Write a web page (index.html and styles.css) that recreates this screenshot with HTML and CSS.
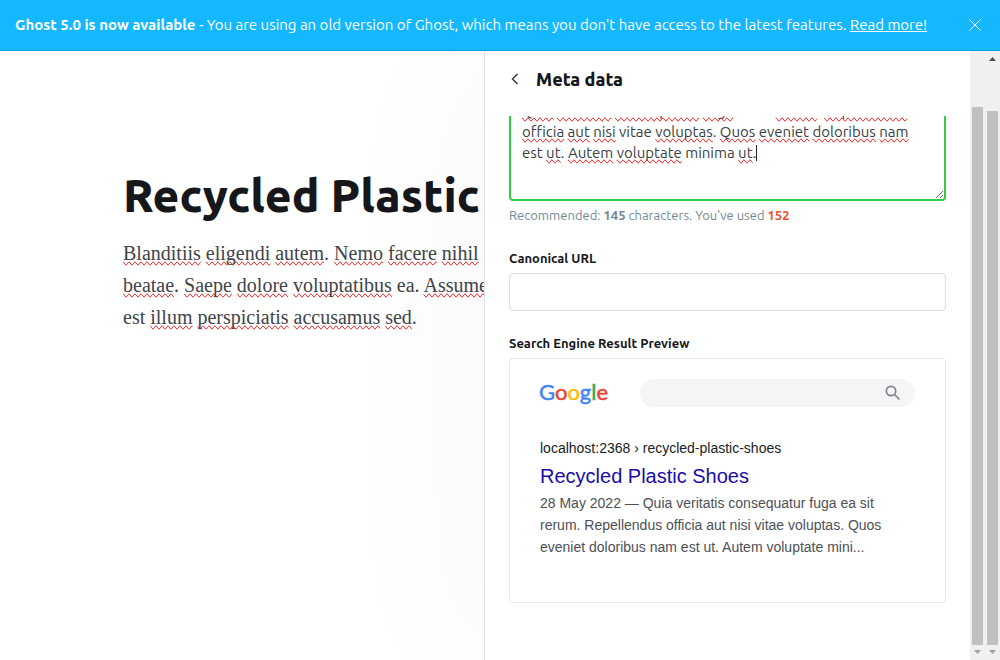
FILE: index.html
```html
<!DOCTYPE html>
<html lang="en">
<head>
<meta charset="utf-8">
<title>Meta data</title>
<link rel="stylesheet" href="styles.css">
</head>
<body>
<div class="app">
  <aside class="banner">
    <p class="banner-text"><strong>Ghost 5.0 is now available</strong> - You are using an old version of Ghost, which means you don't have access to the latest features. <a href="#">Read more!</a></p>
    <button class="banner-close" type="button" aria-label="Dismiss"><svg width="12" height="12" viewBox="0 0 12 12"><path d="M.5.5l11 11M11.5.5l-11 11"/></svg></button>
  </aside>
  <div class="workspace">
    <main class="editor">
      <h1 class="title">Recycled Plastic Shoes</h1>
      <p class="copy"><u>Blanditiis</u> <u>eligendi</u> <u>autem</u>. <u>Nemo</u> <u>facere</u> <u>nihil</u><br><u>beatae</u>. <u>Saepe</u> <u>dolore</u> <u>voluptatibus</u> ea. <u>Assumenda</u><br>est <u>illum</u> <u>perspiciatis</u> <u>accusamus</u> <u>sed</u>.</p>
    </main>
    <section class="panel">
      <header class="panel-head">
        <button class="back" type="button" aria-label="Back"><svg width="8" height="12" viewBox="0 0 8 12"><path d="M6.5 1L1.5 6l5 5"/></svg></button>
        <h2 class="panel-title">Meta data</h2>
      </header>
      <div class="panel-body">
        <div class="field description">
          <div class="area">
            <textarea class="area-text" aria-label="Meta description" wrap="off" spellcheck="false">Quia veritatis consequatur fuga ea sit rerum. Repellendus
officia aut nisi vitae voluptas. Quos eveniet doloribus nam
est ut. Autem voluptate minima ut.</textarea>
            <div class="area-text area-marks" aria-hidden="true"><u>Quia</u> <u>veritatis</u> <u>consequatur</u> <u>fuga</u> ea sit <u>rerum</u>. <u>Repellendus</u>
<u>officia</u> <u>aut</u> <u>nisi</u> vitae <u>voluptas</u>. <u>Quos</u> <u>eveniet</u> <u>doloribus</u> <u>nam</u>
est <u>ut</u>. <u>Autem</u> <u>voluptate</u> minima <u>ut</u>.<span class="caret"></span></div>
          </div>
          <p class="hint">Recommended: <b>145</b> characters. You’ve used <b class="over">152</b></p>
        </div>
        <div class="field">
          <label class="label" for="canonical">Canonical URL</label>
          <input class="input" id="canonical" type="text">
        </div>
        <div class="field">
          <h3 class="label">Search Engine Result Preview</h3>
          <div class="preview">
            <div class="search-row">
              <svg class="logo" width="70" height="30" viewBox="0 0 70 30" role="img" aria-label="Google"><text x="-1" y="22"><tspan class="blue">G</tspan><tspan class="red">o</tspan><tspan class="yellow">o</tspan><tspan class="blue">g</tspan><tspan class="green">l</tspan><tspan class="red">e</tspan></text></svg>
              <div class="search-bar"><svg width="16" height="16" viewBox="0 0 16 16"><circle cx="6" cy="6" r="4.7"/><path d="M9.5 9.5l5 5"/></svg></div>
            </div>
            <div class="result-url">localhost:2368 › recycled-plastic-shoes</div>
            <a class="result-title" href="#">Recycled Plastic Shoes</a>
            <p class="result-text">28 May 2022 — Quia veritatis consequatur fuga ea sit rerum. Repellendus officia aut nisi vitae voluptas. Quos eveniet doloribus nam est ut. Autem voluptate mini...</p>
          </div>
        </div>
      </div>
    </section>
    <div class="track inner"><div class="thumb"></div><svg width="7" height="4" viewBox="0 0 7 4"><path d="M0 0h7L3.500 4z"/></svg></div>
    <div class="track outer"><svg class="up" width="7" height="4" viewBox="0 0 7 4"><path d="M0 4h7L3.500 0z"/></svg><div class="thumb"></div><svg width="7" height="4" viewBox="0 0 7 4"><path d="M0 0h7L3.500 4z"/></svg></div>
  </div>
</div>
</body>
</html>
```
FILE: styles.css
```css
* { box-sizing: border-box; margin: 0; }
body { font-family: Ubuntu, "Noto Sans", sans-serif; color: #15171a; background: #fff; }
button { border: 0; padding: 0; background: none; display: flex; cursor: pointer; }
svg { display: block; fill: none; }
.app { min-height: 100vh; display: flex; flex-direction: column; }

.banner { display: flex; align-items: center; justify-content: space-between; padding: 0 19px 0 15px; min-height: 51px; background: #14b8ff; border-bottom: 1px solid #0a9ee6; color: #fff; }
.banner-text { font-size: 15px; line-height: 20px; }
.banner a { color: inherit; }
.banner-close { stroke: #fff; }

.workspace { flex: 1; display: grid; grid-template-columns: minmax(0, 1fr) 486px 15px 15px; overflow: hidden; }
.editor { overflow: hidden; white-space: nowrap; padding: 112px 0 0 123px; }
.title { font-size: 46px; line-height: 64px; font-weight: 800; margin-bottom: 10px; }
.copy { font-family: "Liberation Serif", serif; font-size: 20px; line-height: 32px; color: #3f4449; }
u { text-decoration: spelling-error; }

.panel { position: relative; min-width: 0; display: flex; flex-direction: column; border-left: 1px solid #dfe3e8; background: #fff; box-shadow: 0 0 180px rgba(0, 0, 0, .045); }
.panel-head { display: flex; align-items: center; gap: 17px; padding: 0 26px 10px; height: 65px; }
.back { stroke: #343f44; stroke-width: 1.5; }
.panel-title { font-size: 18px; line-height: 24px; font-weight: 800; }
.panel-body { overflow: hidden; flex: 1; padding: 0 24px; }
.field { margin-bottom: 23px; }
.description { margin-top: -24px; }
.area { display: grid; }
.area-text { grid-area: 1 / 1; display: block; width: 100%; height: 109px; padding: 6px 11px; border: 2px solid #30cf43; border-radius: 4px; font: 15px/21px Ubuntu, "Noto Sans", sans-serif; color: #394047; background: #fff; white-space: pre; overflow: hidden; resize: vertical; outline: 0; }
.area-marks { color: transparent; background: none; border-color: transparent; pointer-events: none; resize: none; }
.caret { display: inline-block; height: 16px; border-left: 1px solid #222; vertical-align: -3px; }
.hint { margin-top: 4px; font-size: 13px; line-height: 21px; color: #738a94; }
.over { color: #f05230; }
.label { display: block; font-size: 13px; line-height: 18px; font-weight: 600; margin-bottom: 6px; }
.input { display: block; width: 100%; height: 38px; padding: 0 12px; border: 1px solid #dddfe0; border-radius: 4px; font: inherit; }

.preview { border: 1px solid #e5e7e9; border-radius: 4px; padding: 20px 30px 44px; font-family: "Liberation Sans", Arial, sans-serif; }
.search-row { display: flex; align-items: center; gap: 30px; margin-bottom: 32px; height: 28px; }
.logo { font-family: Lato, sans-serif; font-size: 22px; overflow: visible; }
.blue { fill: #4285f4; stroke: #4285f4; }
.red { fill: #ea4335; stroke: #ea4335; }
.yellow { fill: #fbbc05; stroke: #fbbc05; }
.green { fill: #34a853; stroke: #34a853; }
.logo text { stroke-width: .5; }
.search-bar { flex: 1; display: flex; align-items: center; justify-content: flex-end; height: 28px; border-radius: 14px; padding-right: 14px; background: #f3f5f7; stroke: #80868b; stroke-width: 1.7; }
.result-url { font-size: 14px; line-height: 18px; color: #202124; margin-bottom: 6px; }
.result-title { display: block; font-size: 20px; line-height: 26px; color: #1a0dab; text-decoration: none; margin-bottom: 3px; }
.result-text { font-size: 14px; line-height: 22px; color: #4d5156; }

.track { position: relative; display: flex; flex-direction: column; align-items: center; background: #f0f0f0; padding-bottom: 6px; }
.track svg { fill: #a0a0a0; }
.track .up { fill: #505050; margin-bottom: 50px; }
.inner { padding-top: 56px; }
.outer { padding-top: 6px; }
.thumb { flex: 1; width: 11px; background: #c0c0c0; margin-bottom: 5px; }
```
